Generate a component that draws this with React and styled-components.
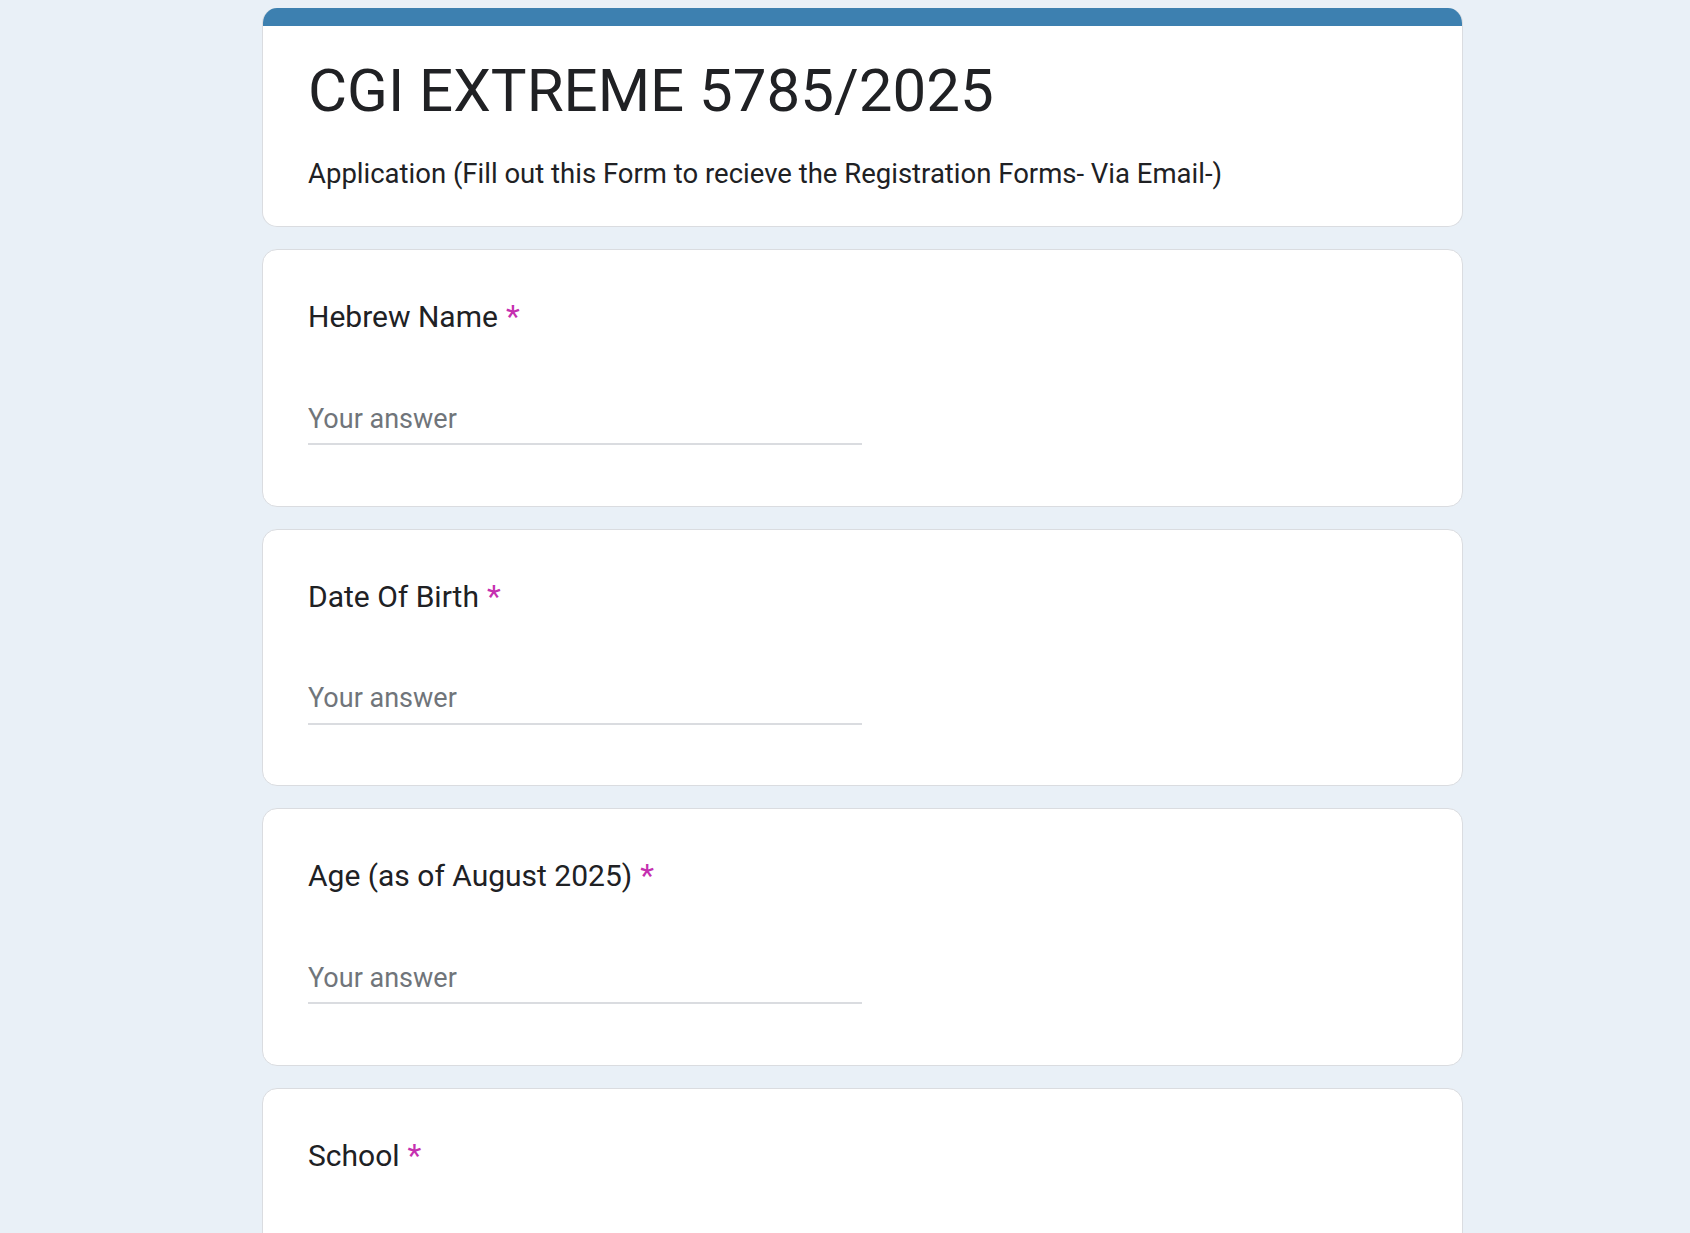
import styled, { createGlobalStyle } from "styled-components";

const GlobalStyle = createGlobalStyle`
  html, body {
    margin: 0;
    padding: 0;
    background: #e9f0f7;
    overflow: hidden;
  }
  body {
    font-family: Roboto, "Liberation Sans", Arial, sans-serif;
    color: #202124;
  }
`;

const Page = styled.div`
  height: 1233px;
  padding: 8px 0 0 35px;
  display: flex;
  flex-direction: column;
  align-items: center;
  gap: 22px;
  box-sizing: border-box;
  overflow: hidden;
`;

const Card = styled.div`
  width: 1201px;
  flex-shrink: 0;
  box-sizing: border-box;
  background: #fff;
  border: 1px solid #dadce0;
  border-radius: 15px;
  overflow: hidden;
`;

const HeaderCard = styled(Card)`
  border-top: none;
`;

const TopBar = styled.div`
  height: 18px;
  background: #3d80b0;
  margin: 0 -1px;
`;

const HeaderBody = styled.div`
  padding: 25px 45px 32px;
`;

const Title = styled.h1`
  margin: 0;
  font-size: 60px;
  font-weight: 400;
  line-height: 80px;
  color: #202124;
`;

const Description = styled.p`
  margin: 23px 0 0;
  font-size: 27.5px;
  line-height: 40px;
  color: #202124;
`;

const QuestionBody = styled.div`
  padding: 44px 45px 46px;
`;

const QuestionTitle = styled.div`
  font-size: 30px;
  line-height: 45px;
  color: #202124;
`;

const Required = styled.span`
  color: #c530b0;
  margin-left: 8px;
  font-size: 32px;
`;

const AnswerWrap = styled.div`
  margin-top: 63px;
  margin-bottom: 14.6px;
  width: 554px;
`;

const AnswerInput = styled.input`
  display: block;
  width: 100%;
  box-sizing: border-box;
  border: none;
  border-bottom: 2px solid #dadce0;
  outline: none;
  padding: 0 0 8px;
  height: 43px;
  line-height: 33px;
  font-family: Roboto, "Liberation Sans", Arial, sans-serif;
  font-size: 27px;
  color: #202124;
  background: transparent;

  &::placeholder {
    color: #70757a;
  }
`;

const questions = [
  "Hebrew Name",
  "Date Of Birth",
  "Age (as of August 2025)",
  "School",
];

function Question({ label }) {
  return (
    <Card>
      <QuestionBody>
        <QuestionTitle>
          {label}
          <Required>*</Required>
        </QuestionTitle>
        <AnswerWrap>
          <AnswerInput placeholder="Your answer" />
        </AnswerWrap>
      </QuestionBody>
    </Card>
  );
}

export default function App() {
  return (
    <>
      <GlobalStyle />
      <Page>
        <HeaderCard>
          <TopBar />
          <HeaderBody>
            <Title>CGI EXTREME 5785/2025</Title>
            <Description>
              Application (Fill out this Form to recieve the Registration Forms- Via Email-)
            </Description>
          </HeaderBody>
        </HeaderCard>
        {questions.map((q) => (
          <Question key={q} label={q} />
        ))}
      </Page>
    </>
  );
}
